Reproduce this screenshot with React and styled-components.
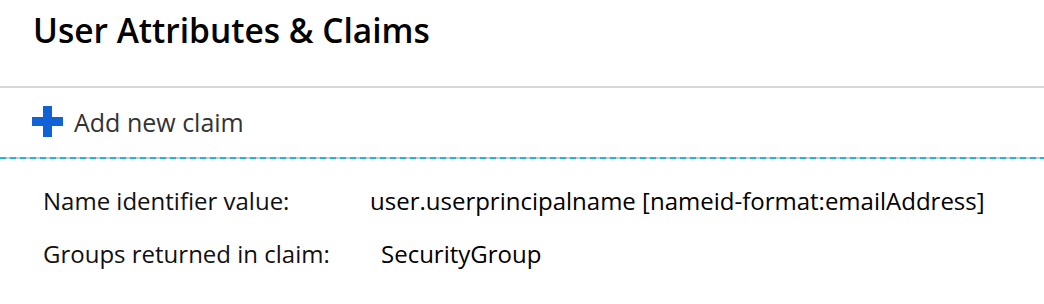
import styled, { createGlobalStyle } from 'styled-components';

const GlobalStyle = createGlobalStyle`
  html, body {
    margin: 0;
    padding: 0;
    background: #ffffff;
  }
  body {
    font-family: "Open Sans", "Noto Sans", sans-serif;
    color: #000;
  }
`;

const claimRows = [
  { label: 'Name identifier value:', value: 'user.userprincipalname [nameid-format:emailAddress]', shift: 0 },
  { label: 'Groups returned in claim:', value: 'SecurityGroup', shift: 11 },
];

function PlusIcon() {
  return (
    <svg width="31" height="31" viewBox="0 0 31 31" aria-hidden="true">
      <rect x="11" y="0" width="9" height="31" fill="#1062d6" />
      <rect x="0" y="11" width="31" height="9" fill="#1062d6" />
    </svg>
  );
}

export default function App() {
  return (
    <Page>
      <GlobalStyle />
      <Header>
        <Title>User Attributes &amp; Claims</Title>
      </Header>
      <Toolbar>
        <AddButton type="button">
          <PlusIcon />
          <span>Add new claim</span>
        </AddButton>
      </Toolbar>
      <Details>
        {claimRows.map((row) => (
          <Row key={row.label}>
            <Label>{row.label}</Label>
            <Value $shift={row.shift}>{row.value}</Value>
          </Row>
        ))}
      </Details>
    </Page>
  );
}

const Page = styled.div`
  width: 1044px;
  height: 304px;
  overflow: hidden;
`;

const Header = styled.div`
  height: 88px;
  padding-left: 33px;
  border-bottom: 2px solid #d6d6d6;
  box-sizing: border-box;
  display: flex;
  align-items: flex-start;
`;

const Title = styled.h1`
  margin: 7px 0 0;
  font-size: 33.5px;
  font-weight: 600;
  line-height: 46px;
  color: #000;
`;

const Toolbar = styled.div`
  height: 71px;
  padding: 0 0 4px 32px;
  box-sizing: border-box;
  display: flex;
  align-items: center;
  position: relative;

  &::after {
    content: '';
    position: absolute;
    left: 0;
    right: 0;
    bottom: 0;
    height: 2px;
    background: repeating-linear-gradient(to right, #1cb5e8 0 6px, #c9c9c9 6px 10px);
  }
`;

const AddButton = styled.button`
  display: flex;
  align-items: center;
  gap: 11px;
  padding: 0;
  border: none;
  background: none;
  font-family: inherit;
  font-size: 25px;
  color: #323232;
  cursor: pointer;
`;

const Details = styled.div`
  padding: 15px 0 0 43px;
  display: flex;
  flex-direction: column;
`;

const Row = styled.div`
  display: grid;
  grid-template-columns: 327px 1fr;
  align-items: center;
  height: 53px;
  font-size: 24px;
`;

const Label = styled.span`
  color: #111;
`;

const Value = styled.span`
  color: #000;
  padding-left: ${(p) => p.$shift}px;
`;
